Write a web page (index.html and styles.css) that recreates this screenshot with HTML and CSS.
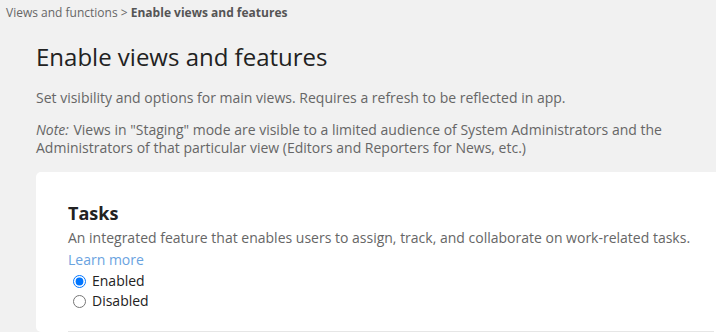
FILE: index.html
```html
<!DOCTYPE html>
<html lang="en">

<head>
    <meta charset="UTF-8">
    <meta name="viewport" content="width=device-width, initial-scale=1.0">
    <title>Enable views and features</title>
    <link rel="stylesheet" href="styles.css">
</head>

<body>
    <div class="breadcrumb">
        <a href="#">Views and functions</a> &gt; <strong>Enable views and features</strong>
    </div>
    <div class="page">
        <h1>Enable views and features</h1>
        <p class="intro">Set visibility and options for main views. Requires a refresh to be reflected in app.</p>
        <p class="note"><em>Note:</em> Views in "Staging" mode are visible to a limited audience of System Administrators and the Administrators of that particular view (Editors and Reporters for News, etc.)</p>

        <div class="card">
            <div class="feature">
                <h2>Tasks</h2>
                <p class="feature-desc">An integrated feature that enables users to assign, track, and collaborate on work-related tasks.</p>
                <a class="learn-more" href="#">Learn more</a>
                <label class="option"><input type="radio" name="tasks" checked> Enabled</label>
                <label class="option"><input type="radio" name="tasks"> Disabled</label>
            </div>
        </div>
    </div>
</body>

</html>
```

FILE: styles.css
```css
html,
body {
    overflow: hidden;
}

body {
    margin: 0;
    background-color: #f1f1f1;
    font-family: "Open Sans", "Liberation Sans", sans-serif;
    color: #666;
}

.breadcrumb {
    padding: 4px 6px 3px;
    font-size: 12px;
    line-height: 17px;
    color: #666;
}

.breadcrumb a {
    color: #666;
    text-decoration: none;
}

.breadcrumb strong {
    color: #555;
}

.page {
    padding: 0 0 0 36px;
    width: 710px;
}

h1 {
    margin: 17px 0 0;
    font-size: 24px;
    font-weight: 400;
    line-height: 32px;
    color: #222;
}

.intro {
    margin: 15px 0 0;
    font-size: 14px;
    line-height: 19px;
}

.note {
    margin: 14px 0 0;
    font-size: 14px;
    line-height: 18px;
}

.note em {
    margin-right: 1px;
}

.card {
    margin-top: 15px;
    background: #fff;
    border-radius: 5px;
    padding: 29px 32px 0;
}

.feature {
    border-bottom: 1px solid #e6e6e6;
    padding-bottom: 20px;
}

h2 {
    margin: 0;
    font-size: 18px;
    font-weight: 700;
    line-height: 24px;
    color: #222;
}

.feature-desc {
    margin: 3px 0 0;
    font-size: 14px;
    line-height: 20px;
}

.learn-more {
    display: block;
    margin: 2px 0 1px;
    font-size: 14px;
    line-height: 20px;
    color: #6aa3df;
    text-decoration: none;
}

.option {
    display: flex;
    align-items: center;
    gap: 6px;
    font-size: 14px;
    line-height: 20px;
    color: #222;
}

.option input {
    margin: 0 0 0 5px;
    width: 13px;
    height: 13px;
}
```
